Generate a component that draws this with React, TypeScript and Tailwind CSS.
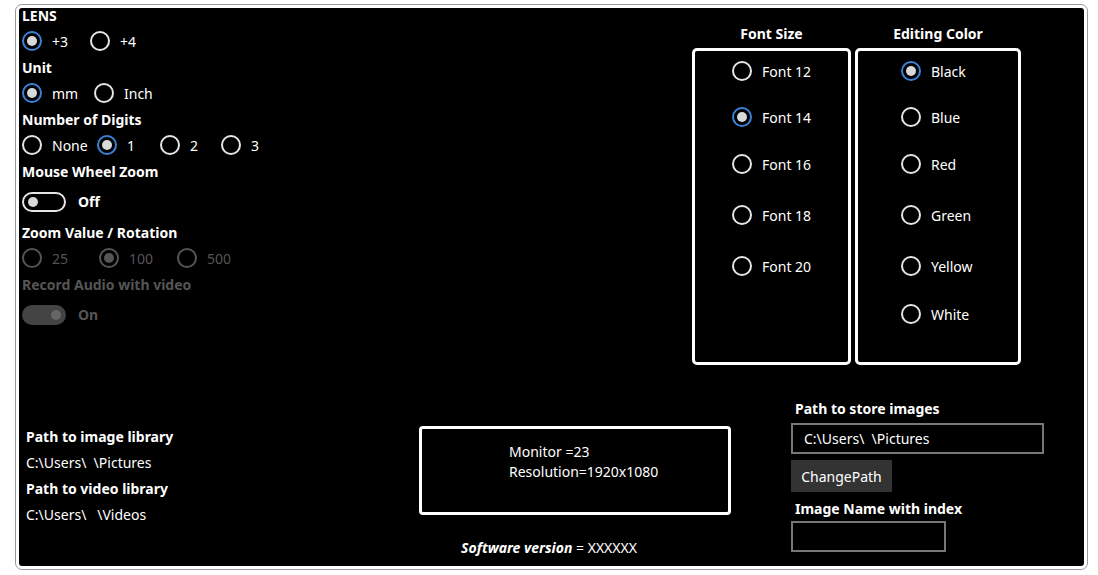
import React from "react";

const F = { fontFamily: '"Noto Sans", "Open Sans", sans-serif' };

function Radio({ on, dim, label, w }: { on?: boolean; dim?: boolean; label: string; w: string }) {
  const ring = dim ? "border-[#555]" : on ? "border-[#3b82d6]" : "border-[#e5e5e5]";
  return (
    <div className={`flex items-center ${w}`}>
      <div className={`w-[20px] h-[20px] rounded-full border-2 ${ring} flex items-center justify-center shrink-0`}>
        {on && <div className={`w-[10px] h-[10px] rounded-full ${dim ? "bg-[#555]" : "bg-[#d9d9d9]"}`} />}
      </div>
      <span className={`ml-[10px] text-[14px] ${dim ? "text-[#555]" : "text-white"}`}>{label}</span>
    </div>
  );
}

function Label({ t, dim }: { t: string; dim?: boolean }) {
  return <div className={`h-[26px] flex items-center font-bold text-[14px] ${dim ? "text-[#555]" : "text-white"}`}>{t}</div>;
}

function Toggle({ on, dim }: { on?: boolean; dim?: boolean }) {
  return (
    <div className="h-[35px] flex items-center">
      {dim ? (
        <div className="w-[44px] h-[20px] rounded-full bg-[#444] flex items-center justify-end pr-[5px]">
          <div className="w-[10px] h-[10px] rounded-full bg-[#666]" />
        </div>
      ) : (
        <div className="w-[44px] h-[20px] rounded-full border-2 border-[#e5e5e5] flex items-center pl-[4px]">
          <div className="w-[10px] h-[10px] rounded-full bg-[#d9d9d9]" />
        </div>
      )}
      <span className={`ml-[12px] font-bold text-[14px] ${dim ? "text-[#555]" : "text-white"}`}>{on ? "On" : "Off"}</span>
    </div>
  );
}

export default function App() {
  const fonts = [
    ["Font 12", "mt-[8px]", false],
    ["Font 14", "mt-[22px]", true],
    ["Font 16", "mt-[23px]", false],
    ["Font 18", "mt-[27px]", false],
    ["Font 20", "mt-[27px]", false],
  ] as const;
  const colors = [
    ["Black", "mt-[8px]", true],
    ["Blue", "mt-[22px]", false],
    ["Red", "mt-[23px]", false],
    ["Green", "mt-[27px]", false],
    ["Yellow", "mt-[27px]", false],
    ["White", "mt-[24px]", false],
  ] as const;
  return (
    <div className="w-[1098px] h-[575px] bg-white pt-[5px] pl-[16px]" style={F}>
      <div className="w-[1071px] h-[564px] bg-black border-[3px] border-white rounded-[6px] outline outline-1 outline-[#999] flex flex-col text-white">
        <div className="h-[388px] flex">
          <div className="flex-1 pl-[3px] -mt-[6px]">
            <Label t="LENS" />
            <div className="h-[26px] flex items-center"><Radio on label="+3" w="w-[68px]" /><Radio label="+4" w="w-[60px]" /></div>
            <Label t="Unit" />
            <div className="h-[26px] flex items-center"><Radio on label="mm" w="w-[72px]" /><Radio label="Inch" w="w-[60px]" /></div>
            <Label t="Number of Digits" />
            <div className="h-[26px] flex items-center"><Radio label="None" w="w-[75px]" /><Radio on label="1" w="w-[63px]" /><Radio label="2" w="w-[61px]" /><Radio label="3" w="w-[40px]" /></div>
            <Label t="Mouse Wheel Zoom" />
            <Toggle />
            <Label t="Zoom Value / Rotation" />
            <div className="h-[26px] flex items-center"><Radio dim label="25" w="w-[77px]" /><Radio dim on label="100" w="w-[78px]" /><Radio dim label="500" w="w-[60px]" /></div>
            <Label t="Record Audio with video" dim />
            <Toggle on dim />
          </div>
          <div className="flex gap-[4px] pr-[63px] pt-[13px]">
            <div className="w-[159px] flex flex-col items-center">
              <div className="h-[24px] font-bold text-[14px] flex items-center">Font Size</div>
              <div className="mt-[3px] w-full h-[317px] border-[3px] border-white rounded-[5px] pl-[37px]">
                {fonts.map(([t, m, on]) => (
                  <div key={t} className={`${m} h-[24px] flex items-center`}><Radio on={on} label={t} w="w-[110px]" /></div>
                ))}
              </div>
            </div>
            <div className="w-[166px] flex flex-col items-center">
              <div className="h-[24px] font-bold text-[14px] flex items-center">Editing Color</div>
              <div className="mt-[3px] w-full h-[317px] border-[3px] border-white rounded-[5px] pl-[43px]">
                {colors.map(([t, m, on]) => (
                  <div key={t} className={`${m} h-[24px] flex items-center`}><Radio on={on} label={t} w="w-[110px]" /></div>
                ))}
              </div>
            </div>
          </div>
        </div>
        <div className="flex-1 flex text-[14px]">
          <div className="w-[400px] pl-[7px] pt-[27px]">
            <div className="h-[26px] flex items-center font-bold">Path to image library</div>
            <div className="h-[26px] flex items-center">C:\Users\&nbsp;&nbsp;\Pictures</div>
            <div className="h-[26px] flex items-center font-bold">Path to video library</div>
            <div className="h-[26px] flex items-center">C:\Users\&nbsp;&nbsp;&nbsp;\Videos</div>
          </div>
          <div className="w-[372px] pt-[30px] flex flex-col">
            <div className="w-[312px] h-[89px] border-[3px] border-white rounded-[4px] pl-[87px] pt-[13px] leading-[20px]">
              <div>Monitor =23</div>
              <div>Resolution=1920x1080</div>
            </div>
            <div className="w-[260px] mt-[22px] text-center">
              <span className="font-bold italic">Software version</span> = XXXXXX
            </div>
          </div>
          <div className="flex-1 pt-[1px]">
            <div className="h-[22px] flex items-center font-bold pl-[4px]">Path to store images</div>
            <div className="mt-[4px] w-[253px] h-[31px] border-2 border-[#777] flex items-center pl-[11px]">C:\Users\&nbsp;&nbsp;\Pictures</div>
            <div className="mt-[6px] w-[101px] h-[32px] bg-[#333] flex items-center justify-center">ChangePath</div>
            <div className="mt-[4px] h-[24px] flex items-center font-bold pl-[4px]">Image Name with index</div>
            <div className="mt-[1px] w-[155px] h-[31px] border-2 border-[#777]" />
          </div>
        </div>
      </div>
    </div>
  );
}
